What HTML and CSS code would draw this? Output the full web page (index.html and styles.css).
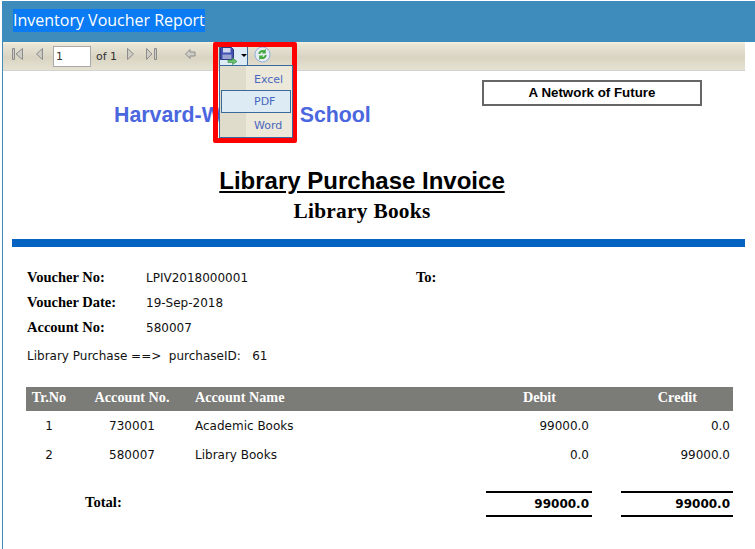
FILE: index.html
```html
<!DOCTYPE html>
<html lang="en">
<head>
<meta charset="utf-8">
<title>Inventory Voucher Report</title>
<link rel="stylesheet" href="styles.css">
</head>
<body>
<div class="panel">
  <header class="heading"><span class="heading-title">Inventory Voucher Report</span></header>
  <div class="viewer">
    <div class="toolbar">
      <svg class="ico first" width="14" height="14" viewBox="0 0 14 14"><path d="M2.500 1.500h2v11h-2z" class="n"/><path d="M12.500 1.500v11L6 7z" class="n"/></svg>
      <svg class="ico prev" width="10" height="14" viewBox="0 0 10 14"><path d="M8.500 1.500v11L2.500 7z" class="n"/></svg>
      <input class="page-input" type="text" value="1">
      <span class="of">of 1</span>
      <svg class="ico next" width="10" height="14" viewBox="0 0 10 14"><path d="M2.500 1.500v11l6-5.500z" class="n"/></svg>
      <svg class="ico last" width="14" height="14" viewBox="0 0 14 14"><path d="M2.500 1.500v11L8 7z" class="n"/><path d="M10.500 1.500h2v11h-2z" class="n"/></svg>
      <svg class="ico back" width="14" height="14" viewBox="0 0 14 14"><path d="M1.500 7 6 2.500v2.500h5v4H6v2.500z" class="n"/></svg>
      <div class="export-btn">
        <svg class="save" width="18" height="18" viewBox="0 0 18 18"><path d="M.5.500h11l2 2v10H.5z" fill="#3f51b5" stroke="#2b3a80"/><path d="M3 1h7.500v4.500H3z" fill="#d3d8ee"/><path d="M2.500 7.500h9V12h-9z" fill="#9aa3cf"/><path d="M8 13h4.500v-2l4.500 3.500-4.500 3V15.500H8z" fill="#6cc070" stroke="#3c8f48" stroke-width=".7"/></svg>
        <span class="caret"></span>
      </div>
      <svg class="refresh" width="17" height="17" viewBox="0 0 18 18"><circle cx="9" cy="9" r="8" fill="#e6edf6" stroke="#8aa6dc"/><path d="M4.500 8.500a4.800 4.800 0 0 1 6.500-4L12.500 3v5H8l1.500-1.600A2.800 2.800 0 0 0 6.500 8.500z" fill="#45a83f"/><path d="M13.500 9.500a4.800 4.800 0 0 1-6.500 4L5.500 15v-5H10l-1.500 1.600a2.800 2.800 0 0 0 3-2.100z" fill="#45a83f"/></svg>
    </div>

    <div class="report">
      <div class="brand-row">
        <h2 class="school">Harvard-Westford School</h2>
        <div class="motto">A Network of Future</div>
      </div>
      <h1 class="invoice-title">Library Purchase Invoice</h1>
      <h3 class="invoice-sub">Library Books</h3>
      <div class="rule"></div>

      <div class="meta">
        <div class="meta-row"><span class="label">Voucher No:</span><span class="value v-no">LPIV2018000001</span><span class="label to">To:</span></div>
        <div class="meta-row"><span class="label">Voucher Date:</span><span class="value">19-Sep-2018</span></div>
        <div class="meta-row"><span class="label">Account No:</span><span class="value">580007</span></div>
        <div class="note">Library Purchase ==&gt;&nbsp; purchaseID:&nbsp;&nbsp; 61</div>
      </div>

      <table class="ledger">
        <thead>
          <tr><th class="c-tr">Tr.No</th><th class="c-no">Account No.</th><th class="c-name">Account Name</th><th class="c-debit">Debit</th><th class="c-credit">Credit</th></tr>
        </thead>
        <tbody>
          <tr><td class="c-tr">1</td><td class="c-no">730001</td><td class="c-name">Academic Books</td><td class="num">99000.0</td><td class="num">0.0</td></tr>
          <tr><td class="c-tr">2</td><td class="c-no">580007</td><td class="c-name">Library Books</td><td class="num">0.0</td><td class="num">99000.0</td></tr>
        </tbody>
      </table>

      <div class="totals">
        <span class="total-label">Total:</span>
        <span class="total-box box-debit">99000.0</span>
        <span class="total-box box-credit">99000.0</span>
      </div>
    </div>

    <div class="highlight">
      <ul class="menu">
        <li class="menu-item">Excel</li>
        <li class="menu-item active">PDF</li>
        <li class="menu-item">Word</li>
      </ul>
    </div>
  </div>
</div>
</body>
</html>
```
FILE: styles.css
```css
* { box-sizing: border-box; }
html, body { margin: 0; padding: 0; background: #fff; }
body { width: 755px; height: 549px; overflow: hidden; padding: 1px 0 0 2px; }
.panel { height: 548px; border-left: 1px solid #3d8cbc; }
.heading { height: 41px; background: #3d8cbc; padding: 8px 0 0 11px; margin-left: -1px; }
.heading-title { display: inline-block; height: 23px; background: #0a7bf2; color: #fff; font: 16px/23px "Open Sans", sans-serif; white-space: nowrap; }
.viewer { position: relative; width: 742px; }
.toolbar { height: 29px; border-bottom: 1px solid #d3d3d3; display: flex; align-items: center; position: relative;
  background: linear-gradient(#f6f1de 0, #e9e5d5 3px, #d9d4c2 55%, #e6e2d2 100%); color: #333; }
.n { fill: #cdcdc6; stroke: #8c8c8c; }
.ico { flex: none; margin-top: -5px; }
.first { margin-left: 7px; }
.prev { margin-left: 10px; }
.page-input { width: 38px; height: 21px; margin-left: 9px; border: 1px solid #a9a9a9; background: #fff; padding: 0 2px; font: 11px "DejaVu Sans", sans-serif; color: #333; }
.of { margin-left: 5px; font: 11px "DejaVu Sans", sans-serif; color: #333; }
.next { margin-left: 8px; }
.last { margin-left: 9px; }
.back { margin-left: 26px; }
.export-btn { flex: none; width: 29px; height: 19px; margin-left: 21px; align-self: flex-start; margin-top: 4px; display: flex; align-items: flex-start; background: #dcebf4; border: 1px solid #3a6a9b; border-bottom: 0; }
.save { flex: none; margin-top: 0; }
.caret { width: 0; height: 0; margin: 7px 0 0 3px; border: 3px solid transparent; border-top: 3px solid #000; border-bottom: 0; }
.refresh { flex: none; margin-left: 6px; align-self: flex-start; margin-top: 4px; }

.report { padding: 0 0 0 9px; }
.brand-row { height: 59px; position: relative; display: flex; align-items: flex-start; }
.school { margin: 32px 0 0 102px; font: bold 21.33px/24px "Liberation Sans", sans-serif; color: #4a67df; white-space: nowrap; }
.motto { position: absolute; left: 470px; top: 9px; width: 220px; height: 26px; border: 2px solid #666; font: bold 13.33px/22px "Liberation Sans", sans-serif; text-align: center; color: #000; }
.invoice-title { margin: 37px 0 0; width: 700px; text-align: center; font: bold 24px/28px "Liberation Sans", sans-serif; text-decoration: underline; color: #000; }
.invoice-sub { margin: 4px 0 0; width: 700px; text-align: center; font: bold 21.33px/24px "Liberation Serif", serif; letter-spacing: .3px; color: #000; }
.rule { height: 8px; margin-top: 16px; width: 733px; background: #0563c1; }

.meta { margin: 18px 0 0 15px; height: 122px; position: relative; }
.meta-row { display: flex; height: 25px; align-items: center; }
.label { width: 119px; flex: none; font: bold 14.5px "Liberation Serif", serif; color: #000; }
.value { font: 12px "DejaVu Sans", sans-serif; color: #111; }
.v-no { width: 270px; }
.to { width: auto; }
.note { margin-top: 9px; font: 12px "DejaVu Sans", sans-serif; color: #111; }

.ledger { margin: 0 0 0 14px; width: 707px; border-collapse: collapse; table-layout: fixed; }
.ledger th { height: 24px; background: #7b7b78; color: #fff; font: bold 14.2px/18px "Liberation Serif", serif; text-align: left; padding: 0 0 4px; }
.ledger td { height: 29px; font: 12px "DejaVu Sans", sans-serif; color: #111; padding: 0; }
.ledger .c-tr { width: 46px; text-align: center; }
.ledger .c-no { width: 120px; text-align: center; }
.ledger .c-name { width: 278px; text-align: left; padding-left: 3px; }
.ledger .c-debit { width: 122px; text-align: right; padding-right: 36px; }
.ledger .c-credit { text-align: right; padding-right: 36px; }
.ledger .num { text-align: right; padding-right: 3px; }

.totals { position: relative; height: 28px; margin-top: 22px; }
.total-label { position: absolute; left: 73px; top: 3px; font: bold 14.6px "Liberation Serif", serif; color: #000; }
.total-box { position: absolute; top: 0; height: 26px; border-top: 2px solid #000; border-bottom: 2px solid #000; font: bold 12px/22px "DejaVu Sans", sans-serif; text-align: right; color: #000; padding-right: 3px; }
.box-debit { left: 474px; width: 106px; }
.box-credit { left: 609px; width: 112px; }

.highlight { position: absolute; left: 210px; top: 0; width: 84px; height: 101px; border: 5px solid #f00; border-radius: 2px; padding: 18px 0 0 1px; }
.menu { list-style: none; margin: 0; padding: 1px; width: 74px; height: 73px; border: 1px solid #3a6a9b; background: linear-gradient(90deg, #e0dccb 0, #e0dccb 26px, #ece8da 26px); font: 11px "DejaVu Sans", sans-serif; color: #4a67bf; }
.menu-item { height: 23px; line-height: 25px; padding-left: 33px; }
.active { background: #dcebf4; border: 1px solid #3a6a9b; line-height: 21px; padding-left: 32px; }
```
